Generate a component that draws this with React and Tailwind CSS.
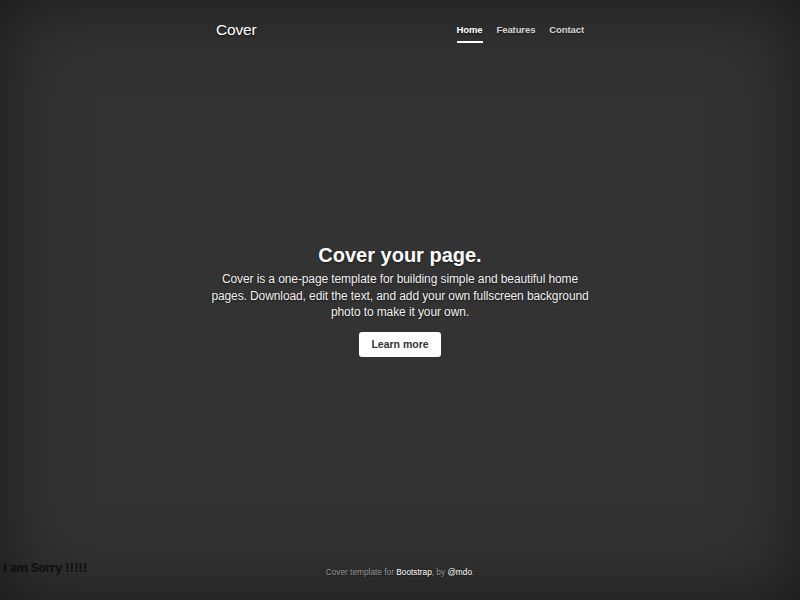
export default function App() {
  const ts = "[text-shadow:0_1px_2px_rgba(0,0,0,0.5)]";
  return (
    <div className="relative h-[600px] w-[800px] overflow-hidden bg-[#333333] shadow-[inset_0_0_80px_rgba(0,0,0,0.5)] text-white font-['Liberation_Sans',Arial,sans-serif]">
      <div className={`mx-auto flex h-full w-[400px] flex-col ${ts}`}>
        <header className="flex items-start justify-between px-4 pt-[21px]">
          <h3 className="text-[15.5px] leading-[18px] font-normal tracking-[-0.2px]">Cover</h3>
          <nav className="mt-[2px] flex gap-[14px] text-[9.5px] font-bold leading-[14px] tracking-[-0.1px]">
            <a className="border-b-2 border-white pb-[4px] text-white">Home</a>
            <a className="pb-[4px] text-white/80 border-b-2 border-transparent">Features</a>
            <a className="pb-[4px] text-white/80 border-b-2 border-transparent">Contact</a>
          </nav>
        </header>
        <main className="-mt-[11px] flex flex-1 flex-col items-center justify-center px-[10px] text-center">
          <h1 className="text-[20px] font-bold leading-[26px]">Cover your page.</h1>
          <p className="mt-[3px] text-[12px] font-normal leading-[16.5px] tracking-[-0.1px] text-white/95">
            Cover is a one-page template for building simple and beautiful home pages. Download, edit the text, and add your own fullscreen background photo to make it your own.
          </p>
          <a className="mt-[11px] inline-block rounded-[3px] bg-white px-[12px] py-[6px] text-[10.5px] font-bold leading-[13px] text-[#333] [text-shadow:none]">Learn more</a>
        </main>
        <footer className="pb-[23px] text-center text-[8.3px] leading-[10px] text-white/50">
          Cover template for <a className="text-white">Bootstrap</a>, by <a className="text-white">@mdo</a>.
        </footer>
      </div>
      <div className="absolute left-[3px] top-[560px] text-[12.5px] font-bold leading-[15px] text-[#111] font-['DejaVu_Sans_Condensed','DejaVu_Sans',sans-serif] tracking-[-0.7px]">I am Sorry !!!!!</div>
    </div>
  );
}
